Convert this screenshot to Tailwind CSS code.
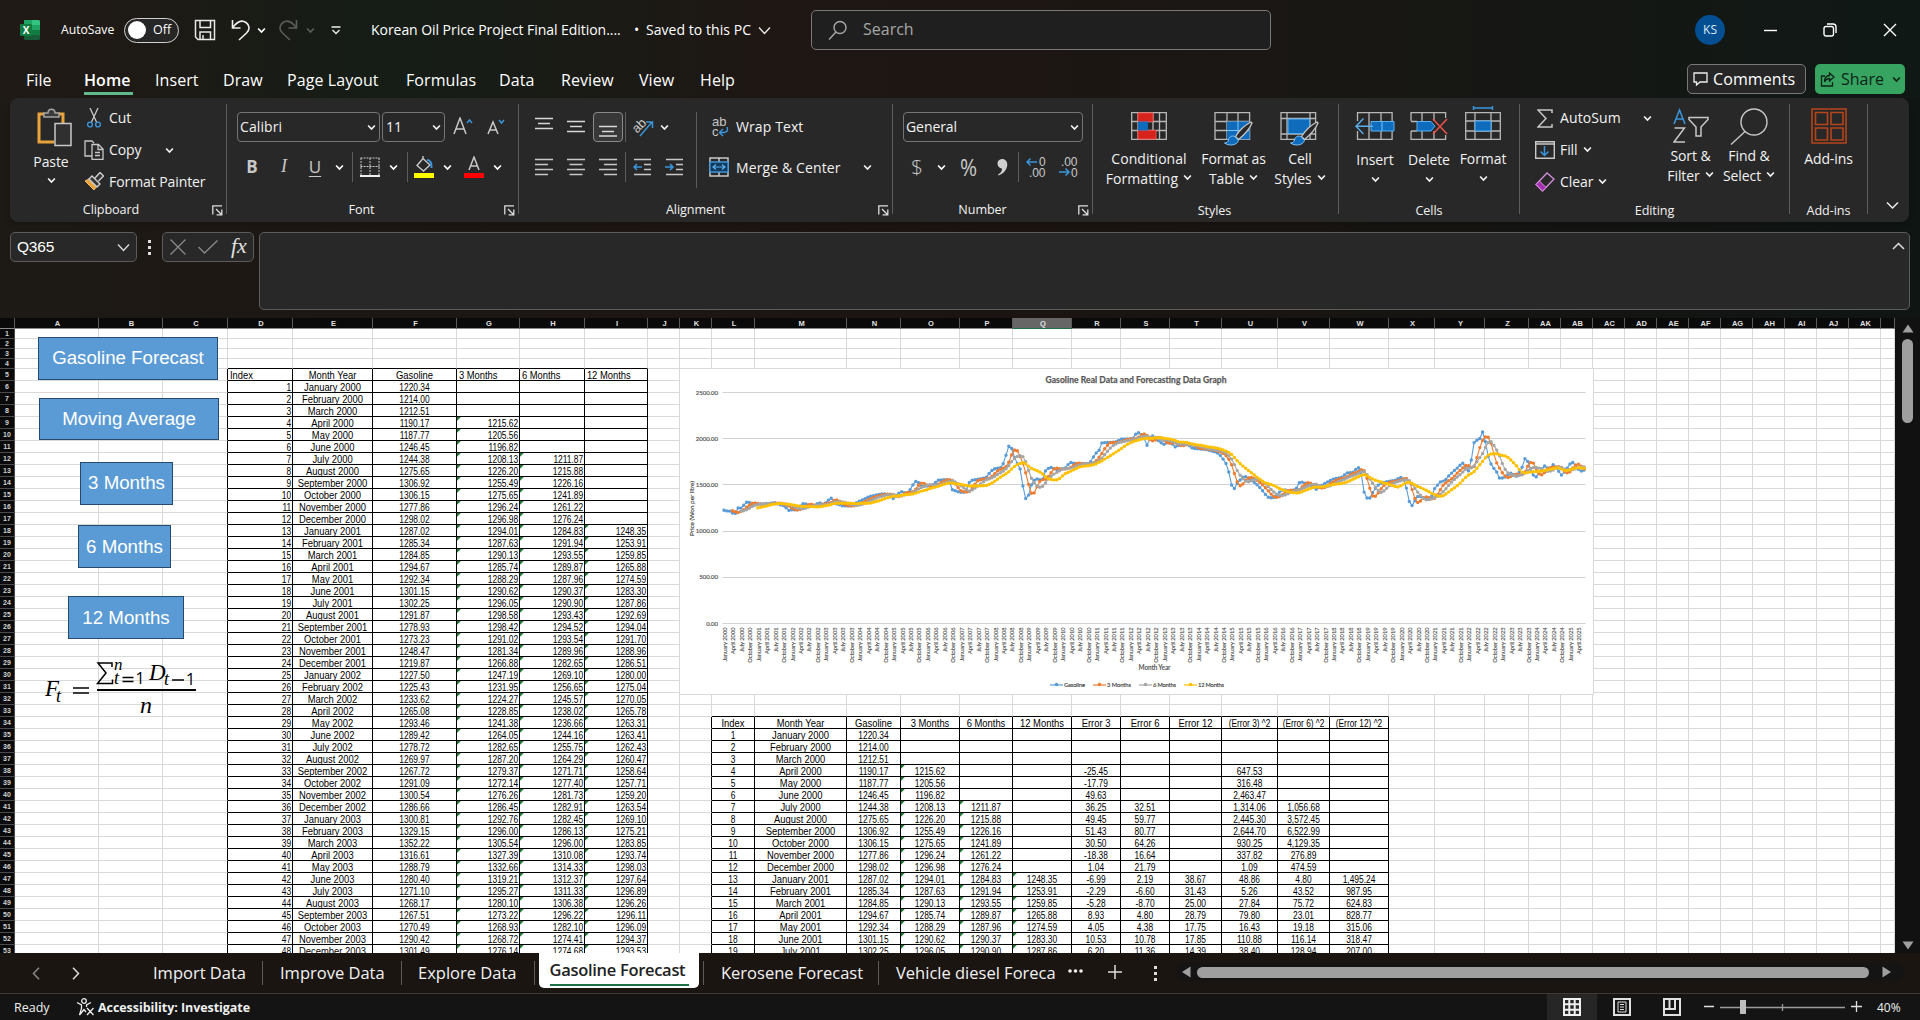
<!DOCTYPE html>
<html lang="en">
<head>
<meta charset="utf-8">
<title>Korean Oil Price Project Final Edition - Excel</title>
<script src="https://cdn.jsdelivr.net/npm/@tailwindcss/browser@4"></script>
</head>
<body class="w-[1920px] h-[1020px] overflow-hidden flex flex-col bg-[#171310] text-white font-['Open_Sans','Noto_Sans',sans-serif] text-sm leading-none whitespace-nowrap">

<!-- shared icon symbols -->
<svg class="hidden">
  <symbol id="chev" viewBox="0 0 8 6"><path d="M1 1.2 4 4.4 7 1.2" fill="none" stroke="currentColor" stroke-width="1.5"/></symbol>
  <symbol id="launch" viewBox="0 0 11 11"><path d="M.8 9.5V.8H10M4 4l5.2 5.2M9.8 4.6v5.2H4.6" fill="none" stroke="#ddd" stroke-width="1.3"/></symbol>
  <symbol id="brush" viewBox="0 0 30 26"><path d="M27 2 C21 5 15 11 11.500 16.500 L14.500 19.500 C20 15 26 8 28 3Z" fill="#292929" stroke="#c8c6c4" stroke-width="1.3"/><path d="M11 16.500c-4-1.500-6 1-6.500 3.500-.5 2-2 3-4 3 4 3 12 3 14-2.500Z" fill="#0f6cbd" stroke="#83c4f5" stroke-width="1"/></symbol>
</svg>

<header class="h-[98px] shrink-0 bg-linear-to-r from-[#1f1a15] via-[#1e1613] to-[#0f1815]">
  <div class="h-[98px] bg-linear-to-r from-transparent from-5% via-[#151d16] via-20% to-transparent to-40%">
  <div class="h-[60px] flex items-center">
    <svg class="w-[20px] h-[20px] ml-[20px]" viewBox="0 0 20 20"><rect x="4" width="16" height="20" rx="1.500" fill="#185c37"/><path d="M4 0h8v5H4z" fill="#21a366"/><path d="M12 0h6.500Q20 0 20 1.500V5h-8z" fill="#33c481"/><path d="M4 5h8v5H4z" fill="#107c41"/><path d="M12 5h8v5h-8z" fill="#21a366"/><path d="M12 10h8v5h-8z" fill="#107c41"/><rect y="4" width="12" height="12" rx="1" fill="#107c41"/><text x="6" y="13.500" text-anchor="middle" font-size="10" font-weight="700" fill="#fff">X</text></svg>
    <span class="ml-[21px] w-[63px] text-[12.2px]">AutoSave</span>
    <div class="w-[55px] h-[25px] rounded-full border border-[#d0d0d0] bg-[#262626] flex items-center pl-[3px]">
      <span class="size-[18px] rounded-full bg-white"></span><span class="ml-[7px] text-[12.5px]">Off</span>
    </div>
    <svg class="size-[22px] ml-[15px]" viewBox="0 0 22 22" fill="none" stroke="#e8e8e8" stroke-width="1.500"><path d="M1.500 1.500h19v19H4l-2.500-2.500zM6 1.500v7h10.500v-7M6 20.500V13h10.500v7.500M9 20v-4"/></svg>
    <svg class="w-[20px] h-[22px] ml-[15px]" viewBox="0 0 20 22" fill="none" stroke="#f0f0f0" stroke-width="1.600"><path d="M1.500 1v8h8M1.500 9C6 2.500 11 .8 15 3.500c4 2.800 4 7 .5 10.500L8 21"/></svg>
    <svg class="w-[9px] h-[7px] ml-[6px]"><use href="#chev"/></svg>
    <svg class="w-[20px] h-[22px] ml-[12px]" viewBox="0 0 20 22" fill="none" stroke="#5c5c5c" stroke-width="1.600"><path d="M18.500 1v8h-8M18.500 9C14 2.500 9 .8 5 3.500c-4 2.800-4 7-.5 10.500L12 21"/></svg>
    <svg class="w-[9px] h-[7px] ml-[8px] text-[#5c5c5c]"><use href="#chev"/></svg>
    <svg class="w-[10px] h-[9px] ml-[16px]" viewBox="0 0 10 9" fill="none" stroke="#eee" stroke-width="1.300"><path d="M.5 1h9M1.500 4 5 7.500 8.500 4"/></svg>
    <span class="ml-[30px] w-[263px] text-[14px] tracking-[-0.05px]">Korean Oil Price Project Final Edition....</span>
    <span class="w-[12px] text-[14px]">•</span>
    <span class="w-[112px] text-[14px] tracking-[0.05px]">Saved to this PC</span>
    <svg class="w-[13px] h-[9px]" viewBox="0 0 13 9" fill="none" stroke="#eee" stroke-width="1.300"><path d="M1 1.500 6.500 7.500 12 1.500"/></svg>
    <div class="ml-[40px] w-[460px] h-[40px] rounded-[5px] border border-[#7a7876] bg-[#1f1f1f] flex items-center">
      <svg class="ml-[16px] size-[20px]" viewBox="0 0 20 20" fill="none" stroke="#a8a8a8" stroke-width="1.400"><circle cx="12" cy="7.500" r="6"/><path d="M8 12 1 19.500"/></svg>
      <span class="ml-[15px] text-[16px] text-[#a6a6a6] -mt-[2px]">Search</span>
    </div>
    <div class="ml-[424px] size-[30px] rounded-full bg-[#034f91] flex items-center justify-center text-[12px] text-[#dbe9f5]">KS</div>
    <svg class="ml-[39px] w-[13px] h-[3px]" viewBox="0 0 13 3"><path d="M0 1.500h13" stroke="#fff" stroke-width="1.400"/></svg>
    <svg class="ml-[46px] size-[14px]" viewBox="0 0 14 14" fill="none" stroke="#fff" stroke-width="1.400"><rect x="1" y="3.500" width="9.500" height="9.500" rx="2"/><path d="M4 1h6q3 0 3 3v6"/></svg>
    <svg class="ml-[46px] size-[14px]" viewBox="0 0 14 14" fill="none" stroke="#fff" stroke-width="1.400"><path d="m1 1 12 12M13 1 1 13"/></svg>
  </div>
  <div class="h-[38px] flex items-start pt-[4px] text-[16px]">
    <nav class="flex h-[34px] items-start pt-[8px] w-[1687px] tracking-[0.08px]">
      <span class="ml-[26px] w-[58px]">File</span>
      <span class="w-[49px] h-[23px] font-semibold border-b-3 border-[#5fb98a]">Home</span>
      <span class="ml-[22px] w-[68px]">Insert</span><span class="w-[64px]">Draw</span><span class="w-[119px]">Page Layout</span><span class="w-[93px]">Formulas</span><span class="w-[62px]">Data</span><span class="w-[78px]">Review</span><span class="w-[61px]">View</span><span>Help</span>
    </nav>
    <div class="w-[119px] h-[30px] rounded-[5px] border border-[#7a7876] bg-[#262626] flex items-center pl-[5px]">
      <svg class="w-[15px] h-[14px]" viewBox="0 0 15 14" fill="none" stroke="#eee" stroke-width="1.300"><path d="M1 1h13v9H7l-3.500 3V10H1z"/></svg>
      <span class="ml-[5px] tracking-[0.1px]">Comments</span>
    </div>
    <div class="ml-[9px] w-[90px] h-[30px] rounded-[5px] bg-[#37a461] text-[#0c2416] flex items-center pl-[5px]">
      <svg class="w-[15px] h-[15px]" viewBox="0 0 15 15" fill="none" stroke="#0c2416" stroke-width="1.300"><path d="M5 4H1.500v10h11v-4M9.500 1 14 5 9.500 9V6.500C7 6.500 5.500 8 4.500 10 4.500 6 6.500 3.700 9.500 3.500z"/></svg>
      <span class="ml-[6px]">Share</span>
      <svg class="w-[9px] h-[7px] ml-[8px]"><use href="#chev"/></svg>
    </div>
  </div>
  </div>
</header>

<!-- ribbon and formula bar -->
<div class="shrink-0 h-[220px] bg-linear-to-r from-[#1d1914] via-[#1c1411] to-[#0f1513]">
<section class="ml-[10px] w-[1899px] h-[124px] rounded-[8px] bg-[#282828] flex text-[#f2f2f2] text-[14px] tracking-[-0.08px] shadow-md">

  <!-- Clipboard -->
  <div class="w-[216px] flex flex-col pt-[4px]">
    <div class="flex h-[98px]">
      <div class="w-[74px] flex flex-col items-center pt-[6px] pl-[8px]">
        <svg class="w-[36px] h-[39px] ml-[7px]" viewBox="0 0 36 39" fill="none"><path d="M8 6H2v28h15M20 6h6v9" stroke="#e8a33d" stroke-width="3"/><path d="M7 9V5h4c0-5 7-5 7 0h4v4z" fill="#3a3a3a" stroke="#a5a5a5" stroke-width="1.500"/><rect x="18" y="15.500" width="16" height="22" fill="#303030" stroke="#c8c8c8" stroke-width="1.500"/></svg>
        <span class="mt-[8px]">Paste</span>
        <svg class="w-[9px] h-[7px] mt-[8px]"><use href="#chev"/></svg>
      </div>
      <div class="flex flex-col">
        <div class="h-[32px] flex items-center"><svg class="ml-[3px] w-[14px] h-[20px]" viewBox="0 0 14 20" fill="none"><path d="M3 0 9.500 14M11 0 4.500 14" stroke="#c8c8c8" stroke-width="1.300"/><circle cx="3" cy="16.500" r="2.400" stroke="#3a96dd" stroke-width="1.400"/><circle cx="11" cy="16.500" r="2.400" stroke="#3a96dd" stroke-width="1.400"/></svg><span class="ml-[8px]">Cut</span></div>
        <div class="h-[32px] flex items-center"><svg class="w-[20px] h-[20px]" viewBox="0 0 20 20" fill="none" stroke="#c8c8c8" stroke-width="1.300"><path d="M8 16H1V1h7l2 2M8 19.300V4.500h6.500l4.500 4.500v10.300zM14 4.500V9.500h5M11 12.500h5M11 15.500h5"/></svg><span class="ml-[5px] w-[56px]">Copy</span><svg class="w-[9px] h-[7px]"><use href="#chev"/></svg></div>
        <div class="h-[32px] flex items-center"><svg class="w-[20px] h-[20px]" viewBox="0 0 20 20" fill="none"><path d="m1 9 9 9 3-4-8-7z" fill="#e8a33d" stroke="#f0c070"/><path d="m5 7 3-3 8 8-3 3zM11 6l5-5.500 3.500 3.500L14.500 9" fill="#333" stroke="#d0d0d0" stroke-width="1.400"/></svg><span class="ml-[5px]">Format Painter</span></div>
      </div>
    </div>
    <div class="h-[20px] flex items-center text-[12.600px]"><span class="w-[202px] text-center">Clipboard</span><svg class="size-[11px]"><use href="#launch"/></svg></div>
  </div>
  <i class="w-px h-[110px] mt-[6px] bg-[#5c5c5c]"></i>

  <!-- Font -->
  <div class="w-[291px] flex flex-col pt-[14px]">
    <div class="flex h-[30px] items-center">
      <div class="ml-[10px] w-[143px] h-[30px] rounded-[4px] border border-[#757575] flex items-center justify-between pl-[2px] pr-[3px]"><span class="tracking-[0.1px]">Calibri</span><svg class="w-[9px] h-[7px]"><use href="#chev"/></svg></div>
      <div class="ml-[2px] w-[63px] h-[30px] rounded-[4px] border border-[#757575] flex items-center justify-between pl-[3px] pr-[3px]"><span>11</span><svg class="w-[9px] h-[7px]"><use href="#chev"/></svg></div>
      <svg class="ml-[8px] w-[20px] h-[20px]" viewBox="0 0 20 20" fill="none" stroke="#c8c8c8" stroke-width="1.500"><path d="M1 17 7 1l6 16M3 12h8"/><path d="m14 6 2.500-3L19 6" stroke="#3a96dd"/></svg>
      <svg class="ml-[14px] w-[20px] h-[20px]" viewBox="0 0 20 20" fill="none" stroke="#c8c8c8" stroke-width="1.500"><path d="M1 17 6 5l5 12M3 13h6"/><path d="m12 3 2.500 3L17 3" stroke="#3a96dd"/></svg>
    </div>
    <div class="mt-[10px] flex h-[30px] items-center text-[#c8c8c8]">
      <span class="ml-[15px] w-[20px] text-center text-[17px] font-bold -mt-[2px]">B</span>
      <span class="ml-[12px] w-[20px] text-center text-[18px] italic font-['Liberation_Serif',serif] -mt-[2px]">I</span>
      <span class="ml-[11px] w-[20px] text-center text-[17px] underline underline-offset-3 -mt-[2px]">U</span>
      <svg class="ml-[10px] w-[9px] h-[7px] text-white"><use href="#chev"/></svg>
      <i class="ml-[8px] w-px h-[30px] bg-[#5c5c5c]"></i>
      <svg class="ml-[7px] size-[20px]" viewBox="0 0 20 20" fill="none" stroke="#c8c8c8"><path d="M.5 1h19M.5 9.500h19M1 1v17M10 1v17M19 1v17" stroke-dasharray="2 1"/><path d="M0 19h20" stroke-width="2" stroke="#eee"/></svg>
      <svg class="ml-[9px] w-[9px] h-[7px] text-white"><use href="#chev"/></svg>
      <i class="ml-[9px] w-px h-[30px] bg-[#5c5c5c]"></i>
      <svg class="ml-[6px] w-[20px] h-[22px]" viewBox="0 0 20 22" fill="none"><path d="m3 9.500 6-7 7 6.500-6.500 6zM9 2.500V0" stroke="#c8c8c8" stroke-width="1.400"/><path d="M13 4q5 0 4.500 8" stroke="#3a96dd" stroke-width="2"/><path d="M0 17h20v5H0z" fill="#ff0"/></svg>
      <svg class="ml-[9px] w-[9px] h-[7px] text-white"><use href="#chev"/></svg>
      <svg class="ml-[12px] w-[20px] h-[22px]" viewBox="0 0 20 22" fill="none"><path d="m5 14 5-13 5 13M7 10h6" stroke="#c8c8c8" stroke-width="1.500"/><path d="M0 17h20v5H0z" fill="#f00"/></svg>
      <svg class="ml-[9px] w-[9px] h-[7px] text-white"><use href="#chev"/></svg>
    </div>
    <div class="mt-[18px] h-[20px] flex items-center text-[12.600px]"><span class="w-[277px] text-center pr-[8px]">Font</span><svg class="size-[11px]"><use href="#launch"/></svg></div>
  </div>
  <i class="w-px h-[110px] mt-[6px] bg-[#5c5c5c]"></i>

  <!-- Alignment -->
  <div class="w-[373px] flex flex-col pt-[14px]">
    <div class="flex">
      <div class="w-[177px] flex flex-col gap-[10px]">
        <div class="flex h-[30px] items-center">
          <svg class="ml-[16px] w-[18px] h-[20px]" viewBox="0 0 18 20" stroke="#d8d8d8" stroke-width="1.500"><path d="M0 1.500h18M3 6.500h12M0 11.500h18"/></svg>
          <svg class="ml-[14px] w-[18px] h-[20px]" viewBox="0 0 18 20" stroke="#d8d8d8" stroke-width="1.500"><path d="M0 4.500h18M3 9.500h12M0 14.500h18"/></svg>
          <div class="ml-[8px] w-[30px] h-[30px] rounded-[4px] border border-[#8a8a8a] bg-[#383838] flex items-center justify-center"><svg class="w-[18px] h-[20px]" viewBox="0 0 18 20" stroke="#d8d8d8" stroke-width="1.500"><path d="M0 9.500h18M3 14.500h12M0 19h18"/></svg></div>
          <i class="ml-[2px] w-px h-[30px] bg-[#5c5c5c]"></i>
          <svg class="ml-[6px] size-[22px]" viewBox="0 0 22 22" fill="none"><text x="0" y="14" font-size="13" fill="#c8c8c8" transform="rotate(-45 7 10)" font-family="Liberation Sans">ab</text><path d="M8 20 20 6M14 6h6.500v6" stroke="#3a96dd" stroke-width="1.500"/></svg>
          <svg class="ml-[6px] w-[9px] h-[7px]"><use href="#chev"/></svg>
        </div>
        <div class="flex h-[30px] items-center">
          <svg class="ml-[16px] w-[18px] h-[18px]" viewBox="0 0 18 18" stroke="#c8c8c8" stroke-width="1.500"><path d="M0 1.500h18M0 6.500h13M0 11.500h18M0 16.500h13"/></svg>
          <svg class="ml-[14px] w-[18px] h-[18px]" viewBox="0 0 18 18" stroke="#c8c8c8" stroke-width="1.500"><path d="M0 1.500h18M2.500 6.500h13M0 11.500h18M2.500 16.500h13"/></svg>
          <svg class="ml-[14px] w-[18px] h-[18px]" viewBox="0 0 18 18" stroke="#c8c8c8" stroke-width="1.500"><path d="M0 1.500h18M5 6.500h13M0 11.500h18M5 16.500h13"/></svg>
          <i class="ml-[8px] w-px h-[30px] bg-[#5c5c5c]"></i>
          <svg class="ml-[7px] w-[19px] h-[18px]" viewBox="0 0 19 18" fill="none" stroke="#c8c8c8" stroke-width="1.500"><path d="M1 1.500h17M11 6.500h7M11 11.500h7M1 16.500h17"/><path d="M9 9H1M4 6 1 9l3 3" stroke="#3a96dd"/></svg>
          <svg class="ml-[13px] w-[19px] h-[18px]" viewBox="0 0 19 18" fill="none" stroke="#c8c8c8" stroke-width="1.500"><path d="M1 1.500h17M11 6.500h7M11 11.500h7M1 16.500h17"/><path d="M0 9h8M5 6l3 3-3 3" stroke="#3a96dd"/></svg>
        </div>
      </div>
      <i class="w-px h-[76px] bg-[#5c5c5c]"></i>
      <div class="flex flex-col gap-[10px]">
        <div class="h-[30px] flex items-center"><svg class="ml-[14px] w-[20px] h-[20px]" viewBox="0 0 20 20" fill="none"><text x="1" y="9" font-size="13" fill="#c8c8c8" font-family="Liberation Sans">ab</text><text x="1" y="19" font-size="13" fill="#c8c8c8" font-family="Liberation Sans">c</text><path d="M16 10q2 5-3 5.500H9M12 12l-3.500 3.500L12 19" stroke="#3a96dd" stroke-width="1.500"/></svg><span class="ml-[5px] tracking-[0.1px]">Wrap Text</span></div>
        <div class="h-[30px] flex items-center"><svg class="ml-[12px] size-[20px]" viewBox="0 0 20 20" fill="none"><path d="M1 1h18v18H1zM10 1v4M10 15v4" stroke="#c8c8c8" stroke-width="1.500"/><path d="M1 5h18v10H1z" fill="#14395a" stroke="#3a96dd" stroke-width="1.300"/><path d="M4 10h12M7 7.500 4 10l3 2.500M13 7.500l3 2.500-3 2.500" stroke="#5ab0ee" stroke-width="1.200"/></svg><span class="ml-[7px] w-[127px] tracking-[0.12px] pt-px">Merge &amp; Center</span><svg class="w-[9px] h-[7px]"><use href="#chev"/></svg></div>
      </div>
    </div>
    <div class="mt-[12px] h-[20px] flex items-center text-[12.600px]"><span class="w-[359px] text-center pr-[6px]">Alignment</span><svg class="size-[11px]"><use href="#launch"/></svg></div>
  </div>
  <i class="w-px h-[110px] mt-[6px] bg-[#5c5c5c]"></i>

  <!-- Number -->
  <div class="w-[199px] flex flex-col pt-[14px]">
    <div class="ml-[10px] w-[180px] h-[30px] rounded-[4px] border border-[#757575] flex items-center justify-between pl-[2px] pr-[3px]"><span>General</span><svg class="w-[9px] h-[7px]"><use href="#chev"/></svg></div>
    <div class="mt-[10px] flex h-[30px] items-center text-[#c8c8c8]">
      <span class="ml-[14px] w-[20px] text-center text-[21px] font-light">$</span>
      <svg class="ml-[10px] w-[9px] h-[7px] text-white"><use href="#chev"/></svg>
      <span class="ml-[13px] w-[20px] text-center text-[23px] tracking-normal"><span class="inline-block -ml-[1px] scale-x-90">%</span></span>
      <svg class="ml-[18px] w-[11px] h-[17px]" viewBox="0 0 11 17"><path d="M5 0c8 0 7 13-3.500 16.500L1 15.500C4 14 5 12 5 9.500 -1 9 -1 0 5 0Z" fill="#d0d0d0"/></svg>
      <i class="ml-[10px] w-px h-[30px] bg-[#5c5c5c]"></i>
      <svg class="ml-[7px] w-[21px] h-[20px] font-['Liberation_Sans',sans-serif]" viewBox="0 0 21 20" fill="none"><text x="13" y="9" font-size="12" fill="#c8c8c8">0</text><text x="3" y="19.500" font-size="12" fill="#c8c8c8">.00</text><path d="M11 5H1M4.500 1.500 1 5l3.500 3.500" stroke="#3a96dd" stroke-width="1.500"/></svg>
      <svg class="ml-[11px] w-[21px] h-[20px] font-['Liberation_Sans',sans-serif]" viewBox="0 0 21 20" fill="none"><text x="3" y="9" font-size="12" fill="#c8c8c8">.00</text><text x="13" y="19.500" font-size="12" fill="#c8c8c8">0</text><path d="M1 15h10M7.500 11.500 11 15l-3.500 3.500" stroke="#3a96dd" stroke-width="1.500"/></svg>
    </div>
    <div class="mt-[18px] h-[20px] flex items-center text-[12.600px]"><span class="w-[185px] text-center pr-[6px]">Number</span><svg class="size-[11px]"><use href="#launch"/></svg></div>
  </div>
  <i class="w-px h-[110px] mt-[6px] bg-[#5c5c5c]"></i>

  <!-- Styles -->
  <div class="w-[245px] flex flex-col pt-[14px]">
    <div class="flex h-[89px] text-center leading-[20px]">
      <div class="ml-[10px] w-[92px] flex flex-col items-center"><svg class="w-[36px] h-[28px]" viewBox="0 0 36 28" fill="none"><path d="M.7.7h34.600v26.600H.7zM.7 9.500h34.600M.7 18.500h34.600M7 .7v26.600M22 .7v26.600M28.500 .7v26.600" stroke="#b8b8b8" stroke-width="1.300"/><path d="M7 1h15v8.500H7zM7 18.500h18V27H7z" fill="#d6231c" stroke="#ee4a44"/><path d="M7 9.500h10v9H7z" fill="#0f6cbd"/></svg>
        <span class="mt-[9px] tracking-[0.05px]">Conditional</span><span class="flex items-center tracking-[0.05px]">Formatting<svg class="w-[9px] h-[7px] ml-[5px] -mt-[3px]"><use href="#chev"/></svg></span></div>
      <div class="w-[77px] flex flex-col items-center"><div class="h-[28px] overflow-visible"><svg class="w-[40px] h-[34px]" viewBox="0 0 40 34" fill="none"><path d="M1 .7h34.600v26.600H1zM1 9.500h34.600M1 18.500h34.600M13 .7v26.600M24 .7v26.600" stroke="#b8b8b8" stroke-width="1.300"/><path d="M13 9.500h22.600v17.800H13z" fill="#0f6cbd"/><path d="M24 9.500v18M13 18.500h22" stroke="#83c4f5"/><use href="#brush" x="10" y="8" width="30" height="26"/></svg></div>
        <span class="mt-[9px]">Format as</span><span class="flex items-center">Table<svg class="w-[9px] h-[7px] ml-[5px] -mt-[3px]"><use href="#chev"/></svg></span></div>
      <div class="w-[56px] flex flex-col items-center"><div class="h-[28px] overflow-visible"><svg class="w-[40px] h-[34px]" viewBox="0 0 40 34" fill="none"><path d="M1 .7h34.600v26.600H1zM1 6.500h34.600M1 22h34.600M7 .7v26.600M30 .7v26.600" stroke="#b8b8b8" stroke-width="1.300"/><path d="M8 7h21.500v14.500H8z" fill="#0f6cbd" stroke="#5ab0ee"/><use href="#brush" x="10" y="8" width="30" height="26"/></svg></div>
        <span class="mt-[9px]">Cell</span><span class="flex items-center">Styles<svg class="w-[9px] h-[7px] ml-[5px] -mt-[3px]"><use href="#chev"/></svg></span></div>
    </div>
    <div class="h-[20px] flex items-center justify-center text-[12.600px] pr-[2px]">Styles</div>
  </div>
  <i class="w-px h-[110px] mt-[6px] bg-[#5c5c5c]"></i>

  <!-- Cells -->
  <div class="w-[180px] flex flex-col pt-[8px]">
    <div class="flex h-[95px] text-center">
      <div class="ml-[9px] w-[54px] flex flex-col items-center pt-[6px]"><svg class="w-[40px] h-[28px]" viewBox="0 0 40 28" fill="none"><path d="M2.500 9V.7h34.600V9M2.500 19v8.300h34.600V19M14 .7v26.600M26 .7v26.600" stroke="#b8b8b8" stroke-width="1.300"/><path d="M16 9.500h23V19H16z" fill="#0f6cbd" stroke="#5ab0ee"/><path d="M27 9.500V19M18 14.200H1M8.500 6.500 1 14.200 8.500 22" stroke="#5ab0ee" stroke-width="1.400"/></svg><span class="mt-[13px]">Insert</span><svg class="w-[9px] h-[7px] mt-[9px]"><use href="#chev"/></svg></div>
      <div class="w-[54px] flex flex-col items-center pt-[6px]"><svg class="w-[38px] h-[28px]" viewBox="0 0 38 28" fill="none"><path d="M1 9V.7h34.600V6M1 19v8.300h34.600V23M12 .7V9M24 .7V9M12 19v8M24 19v8M1 9.500h6M1 19h6" stroke="#b8b8b8" stroke-width="1.300"/><path d="M7 9.500h14l4 4.700-4 4.800H7z" fill="#0f6cbd" stroke="#5ab0ee"/><path d="m23 7 14 15M37 7 23 22" stroke="#e8504a" stroke-width="1.600"/></svg><span class="mt-[13px]">Delete</span><svg class="w-[9px] h-[7px] mt-[9px]"><use href="#chev"/></svg></div>
      <div class="w-[54px] flex flex-col items-center"><svg class="w-[36px] h-[34px]" viewBox="0 0 36 34" fill="none"><path d="M8.500 0v4M27.500 0v4M8.500 2h19" stroke="#3a96dd" stroke-width="1.400"/><path d="M.7 6.700h34.600v26.600H.7zM.7 15h34.600M.7 25h34.600M10 6.700v26.600M26 6.700v26.600" stroke="#b8b8b8" stroke-width="1.300"/><path d="M10 15h16v10H10z" fill="#0f6cbd" stroke="#5ab0ee"/></svg><span class="mt-[12px]">Format</span><svg class="w-[9px] h-[7px] mt-[9px]"><use href="#chev"/></svg></div>
    </div>
    <div class="h-[20px] flex items-center justify-center text-[12.600px]">Cells</div>
  </div>
  <i class="w-px h-[110px] mt-[6px] bg-[#5c5c5c]"></i>

  <!-- Editing -->
  <div class="w-[269px] flex flex-col pt-[4px]">
    <div class="flex h-[99px]">
      <div class="ml-[15px] w-[125px] flex flex-col">
        <div class="h-[32px] flex items-center"><svg class="ml-[2px] w-[16px] h-[19px]" viewBox="0 0 16 19" fill="none" stroke="#c8c8c8" stroke-width="1.500"><path d="M15 4V1H1l8 8.500L1 18h14v-3"/></svg><span class="ml-[7px] w-[83px] tracking-[0.1px]">AutoSum</span><svg class="w-[9px] h-[7px]"><use href="#chev"/></svg></div>
        <div class="h-[32px] flex items-center"><svg class="w-[20px] h-[18px]" viewBox="0 0 20 18" fill="none"><path d="M.7.7h18.600v16.600H.7zM.7 3h18.600" stroke="#c8c8c8" stroke-width="1.400"/><path d="M9.500 5v9.500M5.500 10.500l4 4 4-4" stroke="#3a96dd" stroke-width="1.500"/></svg><span class="ml-[5px]">Fill</span><svg class="w-[9px] h-[7px] ml-[5px] -mt-[2px]"><use href="#chev"/></svg></div>
        <div class="h-[32px] flex items-center"><svg class="w-[20px] h-[20px]" viewBox="0 0 20 20" fill="none"><path d="M1 12.500 12 1l7 6L7.500 19z" stroke="#d590dd" stroke-width="1.300"/><path d="M1 12.500 4.500 9l6.500 6.500L7.500 19z" fill="#a32eb0" stroke="#d590dd"/></svg><span class="ml-[5px]">Clear</span><svg class="w-[9px] h-[7px] ml-[5px] -mt-[2px]"><use href="#chev"/></svg></div>
      </div>
      <div class="w-[61px] flex flex-col items-center text-center leading-[20px] pt-[6px]"><svg class="w-[36px] h-[36px]" viewBox="0 0 36 36" fill="none"><path d="m1 16 5.500-14L12 16M3 11h7" stroke="#3a96dd" stroke-width="1.500"/><path d="M1.500 20h10L1 34h11M16 9.500h19v2l-7 7.500v9h-5v-9l-7-7.500z" stroke="#c8c8c8" stroke-width="1.500"/></svg><span class="pt-[2px]">Sort &amp;</span><span class="flex items-center">Filter<svg class="w-[9px] h-[7px] ml-[5px] -mt-[3px]"><use href="#chev"/></svg></span></div>
      <div class="w-[56px] flex flex-col items-center text-center leading-[20px] pt-[6px]"><svg class="w-[38px] h-[37px]" viewBox="0 0 38 37" fill="none" stroke="#c8c8c8" stroke-width="1.400"><circle cx="24" cy="14" r="13"/><path d="M15 23.500 1 36.500"/></svg><span class="pt-[1px]">Find &amp;</span><span class="flex items-center">Select<svg class="w-[9px] h-[7px] ml-[5px] -mt-[3px]"><use href="#chev"/></svg></span></div>
    </div>
    <div class="h-[20px] flex items-center justify-center text-[12.600px]">Editing</div>
  </div>
  <i class="w-px h-[110px] mt-[6px] bg-[#5c5c5c]"></i>

  <div class="w-[77px] flex flex-col items-center pt-[10px]">
    <svg class="size-[36px]" viewBox="0 0 36 36" fill="none" stroke="#b5451b" stroke-width="1.600"><path d="M1 1h34v34H1zM4.500 4.500h12v12h-12zM20 4.500h12v12H20zM4.500 20h12v12h-12zM20 20h12v12H20z"/></svg>
    <span class="mt-[8px] h-[53px]">Add-ins</span>
    <span class="text-[12.600px]">Add-ins</span>
  </div>
  <i class="w-px h-[110px] mt-[6px] bg-[#5c5c5c]"></i>
  <svg class="ml-[18px] mt-[103px] w-[13px] h-[9px]" viewBox="0 0 13 9" fill="none" stroke="#eee" stroke-width="1.500"><path d="M1 1.500 6.500 7 12 1.500"/></svg>
</section>

<section class="flex pt-[10px] pl-[10px]">
  <div class="w-[127px] h-[30px] rounded-[5px] border border-[#5c5c5c] bg-[#282828] flex items-center justify-between pl-[6px] pr-[6px]"><span class="text-[15.500px] tracking-[-0.2px] font-['Liberation_Sans',sans-serif]">Q365</span><svg class="w-[13px] h-[9px]" viewBox="0 0 13 9" fill="none" stroke="#ddd" stroke-width="1.300"><path d="M1 1.500 6.500 7.500 12 1.500"/></svg></div>
  <svg class="ml-[11px] mt-[8px] w-[3px] h-[15px]" viewBox="0 0 3 15" fill="#ddd"><path d="M0 0h3v3H0zM0 6h3v3H0zM0 12h3v3H0z"/></svg>
  <div class="ml-[11px] w-[92px] h-[30px] rounded-[5px] border border-[#5c5c5c] bg-[#282828] flex items-center">
    <svg class="ml-[7px] size-[16px]" viewBox="0 0 16 16" stroke="#8a8a8a" stroke-width="1.300"><path d="m.5 .5 15 15M15.500 .5l-15 15"/></svg>
    <svg class="ml-[12px] w-[20px] h-[14px]" viewBox="0 0 20 14" fill="none" stroke="#8a8a8a" stroke-width="1.300"><path d="m.5 7 6 6L19.500 .5"/></svg>
    <span class="ml-[13px] -mt-[3px] text-[22px] italic text-[#e0e0e0] font-['Liberation_Serif',serif]">fx</span>
  </div>
  <div class="ml-[5px] w-[1651px] h-[78px] rounded-[5px] border border-[#5c5c5c] bg-[#282828] flex justify-end pt-[9px] pr-[4px]"><svg class="w-[13px] h-[8px]" viewBox="0 0 13 8" fill="none" stroke="#ddd" stroke-width="1.500"><path d="M1 7 6.500 1.500 12 7"/></svg></div>
</section>
</div>

<!-- worksheet -->
<main class="h-[635px] shrink-0 flex bg-[#111] overflow-hidden">
  <div class="relative w-[1895px] h-[635px] overflow-hidden bg-white text-black">
    <table id="sheet" class="table-fixed border-separate border-spacing-0 w-[1895px] font-['Liberation_Sans',sans-serif]"></table>

    <a class="absolute left-[38px] top-[19px] w-[180px] h-[43px] bg-[#5b9bd5] border border-[#274b6d] text-white text-[18.700px] flex items-center justify-center font-['Liberation_Sans',sans-serif]">Gasoline Forecast</a>
    <a class="absolute left-[39px] top-[80px] w-[180px] h-[42px] bg-[#5b9bd5] border border-[#274b6d] text-white text-[18.700px] flex items-center justify-center pt-px font-['Liberation_Sans',sans-serif]">Moving Average</a>
    <a class="absolute left-[80px] top-[144px] w-[93px] h-[43px] bg-[#5b9bd5] border border-[#274b6d] text-white text-[18.700px] flex items-center justify-center font-['Liberation_Sans',sans-serif]">3 Months</a>
    <a class="absolute left-[78px] top-[207px] w-[93px] h-[43px] bg-[#5b9bd5] border border-[#274b6d] text-white text-[18.700px] flex items-center justify-center pt-px font-['Liberation_Sans',sans-serif]">6 Months</a>
    <a class="absolute left-[68px] top-[278px] w-[116px] h-[43px] bg-[#5b9bd5] border border-[#274b6d] text-white text-[18.700px] flex items-center justify-center pt-px font-['Liberation_Sans',sans-serif]">12 Months</a>

    <!-- moving average formula -->
    <svg class="absolute left-[40px] top-[337px] w-[162px] h-[64px] font-['Liberation_Serif',serif]" viewBox="40 655 162 64">
      <g font-style="italic" font-size="23">
        <text x="45" y="696">F</text><text x="56" y="702" font-size="18">t</text>
        <text x="114" y="670" font-size="17">n</text><text x="114" y="684" font-size="18">t</text>
        <text x="149" y="680">D</text><text x="164" y="685" font-size="18">t</text>
        <text x="140" y="713" font-size="24">n</text>
      </g>
      <g font-size="16" font-family="Open Sans"><text x="135.500" y="684">1</text><text x="186" y="685">1</text></g>
      <path d="M73 688h16M73 693h16M122.500 677.500h11M122.500 681.500h11M172 680h12" stroke="#000" stroke-width="1.300"/>
      <path d="M112 667v-4H98l8 10-8.500 10.500H112.500v-4" fill="none" stroke="#000" stroke-width="1.500"/>
      <path d="M97 690h99" stroke="#000" stroke-width="1.800"/>
    </svg>

    <svg id="chart" class="absolute left-[679px] top-[50px] w-[915px] h-[327px] font-['Lato',sans-serif]" viewBox="679 368 915 327"></svg>
  </div>
  <div class="w-[25px] flex flex-col items-center pt-[6px] pb-[3px]">
    <svg class="w-[12px] h-[9px]" viewBox="0 0 12 9"><path d="M6 .5 11.500 8.500H.5z" fill="#9f9f9f"/></svg>
    <span class="mt-[6px] w-[11px] h-[84px] rounded-full bg-[#9f9f9f]"></span>
    <svg class="mt-auto w-[12px] h-[9px]" viewBox="0 0 12 9"><path d="M6 8.500 11.500 .5H.5z" fill="#9f9f9f"/></svg>
  </div>
</main>

<!-- sheet tabs -->
<section class="h-[41px] shrink-0 flex items-center bg-[#1b1512] border-b border-[#3c3a38] text-[16.500px] text-[#f2f2f2]">
  <svg class="ml-[32px] w-[8px] h-[13px]" viewBox="0 0 8 13" fill="none" stroke="#8a8a8a" stroke-width="1.500"><path d="M7 .8 1.500 6.500 7 12.200"/></svg>
  <svg class="ml-[32px] w-[8px] h-[13px]" viewBox="0 0 8 13" fill="none" stroke="#ddd" stroke-width="1.500"><path d="M1 .8 6.500 6.500 1 12.200"/></svg>
  <span class="ml-[73px] w-[109px] pt-px">Import Data</span><i class="w-px h-[24px] bg-[#5c5c5c]"></i>
  <span class="ml-[17px] w-[121px] pt-px">Improve Data</span><i class="w-px h-[24px] bg-[#5c5c5c]"></i>
  <span class="ml-[16px] w-[116px] pt-px">Explore Data</span><i class="w-px h-[24px] bg-[#5c5c5c]"></i>
  <div class="ml-[4px] w-[160px] h-[35px] self-start rounded-b-[5px] bg-white text-[#222] flex flex-col items-center pt-[9px]"><span class="h-[24px] w-[139px] border-b-2 border-[#1e7145] font-semibold tracking-[-0.3px]">Gasoline Forecast</span></div>
  <i class="ml-[4px] w-px h-[24px] bg-[#5c5c5c]"></i>
  <span class="ml-[17px] w-[157px] pt-px">Kerosene Forecast</span><i class="w-px h-[24px] bg-[#5c5c5c]"></i>
  <span class="ml-[17px] w-[172px] pt-px">Vehicle diesel Foreca</span>
  <svg class="-mt-[4px] w-[15px] h-[4px]" viewBox="0 0 15 4" fill="#eee"><circle cx="2" cy="2" r="1.800"/><circle cx="7.500" cy="2" r="1.800"/><circle cx="13" cy="2" r="1.800"/></svg>
  <svg class="ml-[24px] -mt-[3px] w-[16px] h-[16px]" viewBox="0 0 16 16" stroke="#ddd" stroke-width="1.500"><path d="M8 1v14M1 8h14"/></svg>
  <svg class="ml-[31px] w-[3px] h-[15px]" viewBox="0 0 3 15" fill="#ddd"><path d="M0 0h3v3H0zM0 6h3v3H0zM0 12h3v3H0z"/></svg>
  <div class="ml-[20px] -mt-[2px] w-[727px] h-[18px] rounded-full bg-[#141414] flex items-center">
    <svg class="ml-[5px] w-[9px] h-[12px]" viewBox="0 0 9 12"><path d="M0 6 8.500 .5v11z" fill="#9f9f9f"/></svg>
    <span class="ml-[6px] w-[672px] h-[11px] rounded-full bg-[#9f9f9f]"></span>
    <svg class="ml-[13px] w-[9px] h-[12px]" viewBox="0 0 9 12"><path d="M9 6 .5 .5v11z" fill="#9f9f9f"/></svg>
  </div>
</section>

<footer class="h-[26px] shrink-0 flex items-center bg-[#141414] text-[12.500px] text-[#f0f0f0]">
  <span class="ml-[14px] w-[62px] pt-[2px]">Ready</span>
  <svg class="w-[19px] h-[18px]" viewBox="0 0 19 18" fill="none" stroke="#eee" stroke-width="1.300"><circle cx="8" cy="3" r="2.300"/><path d="M1 4.500 5.500 7v3.500L3.500 17 8 11.500l2 2.500M15 4.500 10.500 7v2M11 10l6.500 7M17.500 10 11 17"/></svg>
  <span class="ml-[3px] w-[1449px] font-bold tracking-[-0.06px] pt-[2px]">Accessibility: Investigate</span>
  <div class="w-[50px] h-[26px] bg-[#262626] flex items-center justify-center"><svg class="size-[18px]" viewBox="0 0 18 18" fill="none" stroke="#f0f0f0" stroke-width="2"><path d="M1 1h16v16H1zM1 6.300h16M1 11.700h16M6.300 1v16M11.700 1v16"/></svg></div>
  <svg class="ml-[16px] size-[18px]" viewBox="0 0 18 18" fill="none" stroke="#e0e0e0"><path d="M1 1h16v16H1z" stroke-width="2"/><path d="M5 4h8v10H5zM7 6.500h4M7 9h4M7 11.500h4"/></svg>
  <svg class="ml-[32px] size-[18px]" viewBox="0 0 18 18" fill="none" stroke="#e0e0e0" stroke-width="2"><path d="M1 1h16v16H1zM1 11h11V1M6.500 1v10"/></svg>
  <svg class="ml-[23px] w-[158px] h-[16px]" viewBox="0 0 158 16" stroke="#e0e0e0" stroke-width="1.300"><path d="M0 7.500h10M147 7.500h11M152.500 2v11"/><path d="M16 8.500h125M78.500 5v7" stroke="#9a9a9a"/><path d="M36 1h6v14h-6z" fill="#bdbdbd" stroke="none"/></svg>
  <span class="ml-[15px] pt-[2px] text-[12px]">40%</span>
</footer>

<script>
// exclusive right edge of every column, starting with the row header
const edges = [15,99,163,228,293,373,457,520,585,648,680,712,755,847,901,960,1013,1072,1121,1170,1222,1278,1330,1389,1435,1485,1529,1561,1593,1625,1657,1689,1721,1753,1785,1817,1849,1881,1895];
const names = ["",..."ABCDEFGHIJKLMNOPQRSTUVWXYZ","AA","AB","AC","AD","AE","AF","AG","AH","AI","AJ","AK",""];
const months = ["January","February","March","April","May","June","July","August","September","October","November","December"];
const monthName = i => months[i % 12] + " " + (2000 + Math.floor(i / 12));

const gasoline = "1220.34 1214.00 1212.51 1190.17 1187.77 1246.45 1244.38 1275.65 1306.92 1306.15 1277.86 1298.02 1287.02 1285.34 1284.85 1294.67 1292.34 1301.15 1302.25 1291.87 1278.93 1273.23 1248.47 1219.87 1227.50 1225.43 1233.62 1265.08 1293.46 1289.42 1278.72 1269.97 1267.72 1291.09 1300.54 1286.66 1300.81 1329.15 1352.22 1316.61 1288.79 1280.40 1271.10 1268.17 1267.51 1270.49 1290.42 1301.49".split(" ");
const ma3 = "1215.62 1205.56 1196.82 1208.13 1226.20 1255.49 1275.65 1296.24 1296.98 1294.01 1287.63 1290.13 1285.74 1288.29 1290.62 1296.05 1298.58 1298.42 1291.02 1281.34 1266.88 1247.19 1231.95 1224.27 1228.85 1241.38 1264.05 1282.65 1287.20 1279.37 1272.14 1276.26 1286.45 1292.76 1296.00 1305.54 1327.39 1332.66 1319.21 1295.27 1280.10 1273.22 1268.93 1268.72 1276.14".split(" ");
const ma6 = "1211.87 1215.88 1226.16 1241.89 1261.22 1276.24 1284.83 1291.94 1293.55 1289.87 1287.96 1290.37 1290.90 1293.43 1294.52 1293.54 1289.96 1282.65 1269.10 1256.65 1245.57 1238.02 1236.66 1244.16 1255.75 1264.29 1271.71 1277.40 1281.73 1282.91 1282.45 1286.13 1296.00 1310.08 1314.33 1312.37 1311.33 1306.38 1296.22 1282.10 1274.41 1274.68".split(" ");
const ma12 = "1248.35 1253.91 1259.85 1265.88 1274.59 1283.30 1287.86 1292.69 1294.04 1291.70 1288.96 1286.51 1280.00 1275.04 1270.05 1265.78 1263.31 1263.41 1262.43 1260.47 1258.64 1257.71 1259.20 1263.54 1269.10 1275.21 1283.85 1293.74 1298.03 1297.64 1296.89 1296.26 1296.11 1296.09 1294.37 1293.53".split(" ");
const err3 = "-25.45 -17.79 49.63 36.25 49.45 51.43 30.50 -18.38 1.04 -6.99 -2.29 -5.28 8.93 4.05 10.53 6.20".split(" ");
const err6 = "32.51 59.77 80.77 64.26 16.64 21.79 2.19 -6.60 -8.70 4.80 4.38 10.78 11.36".split(" ");
const err12 = "38.67 31.43 25.00 28.79 17.75 17.85 14.39".split(" ");
const sq3 = "647.53 316.48 2,463.47 1,314.06 2,445.30 2,644.70 930.25 337.82 1.09 48.86 5.26 27.84 79.80 16.43 110.88 38.40".split(" ");
const sq6 = "1,056.68 3,572.45 6,522.99 4,129.35 276.89 474.59 4.80 43.52 75.72 23.01 19.18 116.14 128.94".split(" ");
const sq12 = "1,495.24 987.95 624.83 828.77 315.06 318.47 207.00".split(" ");

const head1 = ["Index","Month Year","Gasoline","3 Months","6 Months","12 Months"];
const head2 = [...head1,"Error 3","Error 6","Error 12","(Error 3) ^2","(Error 6) ^2","(Error 12) ^2"];
const record = i => [String(i + 1), monthName(i), gasoline[i], ma3[i-3], ma6[i-6], ma12[i-12], err3[i-3], err6[i-6], err12[i-12], sq3[i-3], sq6[i-6], sq12[i-12]];

let html = "<colgroup>" + edges.map((e, i) => `<col style="width:${e - (i ? edges[i-1] : 0)}px">`).join("") + "</colgroup>";
html += '<tr class="h-[11px]">' + names.map((n, c) =>
  `<th class="p-0 h-[11px] text-[7.500px] leading-[10px] font-bold text-[#e0e0e0] overflow-hidden border-r border-b border-r-[#5a5a5a] ${n === "Q" ? "bg-[#666] border-b-[#1e7145]" : "bg-[#0a0a0a] border-b-[#8a8a8a]"}"><div class="h-[10px] pt-px pl-[2px] leading-[9px]">${n}</div></th>`).join("") + "</tr>";
for (let r = 1; r <= 53; r++) {
  const tall = r >= 5;
  html += `<tr class="${tall ? "h-[12px]" : "h-[10px]"}"><th class="p-0 bg-[#0a0a0a] border-r border-b border-[#4a4a4a] text-[7px] font-bold text-[#d0d0d0] overflow-hidden ${tall ? "h-[12px]" : "h-[10px]"}"><div class="${tall ? "h-[11px] pt-[2px]" : "h-[9px] pt-px"} leading-[8px]">${r}</div></th>`;
  for (let c = 1; c < edges.length; c++) {
    const in1 = r >= 5 && c >= 4 && c <= 9, in2 = r >= 34 && c >= 12 && c <= 23;
    const right = in1 || in2 || (r >= 5 && c === 3) || (r >= 34 && c === 11);
    const bottom = in1 || in2 || (r === 4 && c >= 4 && c <= 9) || (r === 33 && c >= 12 && c <= 23);
    let text = "", align = "text-center -mx-[8px]", flag = false;
    if (in1) {
      const k = c - 4;
      text = (r === 5 ? head1[k] : record(r - 6)[k]) || "";
      if (k === 0 || k > 2) align = r === 5 ? "text-left pl-[2px] origin-left" : "text-right pr-px origin-right";
      flag = k > 2 && r > 5 && text;
    }
    if (in2) {
      const k = c - 12;
      text = (r === 34 ? head2[k] : record(r - 35)[k]) || "";
      flag = k > 2 && k < 6 && r > 34 && text;
    }
    const squeeze = text[0] === "(" ? "scale-x-[0.83]" : /[A-Z]/.test(text) ? "scale-x-[0.94]" : "scale-x-[0.84]";
    html += `<td class="p-0 overflow-hidden border-r border-b ${right ? "border-r-black" : "border-r-[#d9d9d9]"} ${bottom ? "border-b-black" : "border-b-[#d9d9d9]"} ${flag ? "bg-[linear-gradient(135deg,#1e7b34_2.5px,transparent_3px)]" : ""}">${text ? `<div class="h-[11px] pt-px text-[10px] leading-[11px] ${align} ${squeeze}">${text}</div>` : ""}</td>`;
  }
  html += "</tr>";
}
document.getElementById("sheet").innerHTML = html;

// monthly prices after 2003, as [axis offset, height] key points joined linearly
const keys = [[568,575],[600,560],[640,552],[660,556],[668,568],[693,545],[710,552],[722,538],[735,515],[745,518],[752,530],[768,530],[790,525],[803,512],[830,510],[838,515],[846,540],[862,546],[879,549],[888,545],[896,520],[905,512],[930,508],[947,505],[956,493],[970,478],[990,475],[998,467],[1007,440],[1016,410],[1022,407],[1032,440],[1040,460],[1049,470],[1057,518],[1065,568],[1074,563],[1083,528],[1092,512],[1100,508],[1117,512],[1125,485],[1140,472],[1158,480],[1185,476],[1200,458],[1215,462],[1258,462],[1268,446],[1277,431],[1286,426],[1294,400],[1303,399],[1335,398],[1355,388],[1387,388],[1395,376],[1403,368],[1412,373],[1422,385],[1430,409],[1444,377],[1455,382],[1470,398],[1482,404],[1500,395],[1515,412],[1530,405],[1550,402],[1568,416],[1610,420],[1640,428],[1650,436],[1666,457],[1675,479],[1682,521],[1692,539],[1700,524],[1715,505],[1725,500],[1740,508],[1755,520],[1768,532],[1776,541],[1785,553],[1795,563],[1810,565],[1825,550],[1840,540],[1865,545],[1880,535],[1887,520],[1895,517],[1915,525],[1930,533],[1940,540],[1955,527],[1970,518],[1990,508],[2015,503],[2030,490],[2050,488],[2063,472],[2072,480],[2080,542],[2090,565],[2100,565],[2110,545],[2122,528],[2135,520],[2155,515],[2175,512],[2192,503],[2205,512],[2216,572],[2225,590],[2235,573],[2245,558],[2255,562],[2275,572],[2285,560],[2293,538],[2310,517],[2325,513],[2335,500],[2350,485],[2368,470],[2377,457],[2385,475],[2395,485],[2402,465],[2411,400],[2420,392],[2428,392],[2435,362],[2443,376],[2452,432],[2461,459],[2470,475],[2478,482],[2487,505],[2502,505],[2520,490],[2540,500],[2555,478],[2562,448],[2570,446],[2578,470],[2588,495],[2600,503],[2608,485],[2625,468],[2638,480],[2648,464],[2660,475],[2674,497],[2685,485],[2700,463],[2708,458],[2720,475],[2735,485],[2745,480]];
const price = gasoline.map(Number);
for (let i = 48; i < 306; i++) {
  const x = 162 + i * 8.46;
  let k = 0;
  while (k < keys.length - 2 && keys[k + 1][0] < x) k++;
  const [x0, y0] = keys[k], [x1, y1] = keys[k + 1];
  price.push((940.5 - (y0 + (y1 - y0) * Math.min(1, Math.max(0, (x - x0) / (x1 - x0))))) * 3.607);
}
const average = n => price.map((_, i) => i < n ? null : price.slice(i - n, i).reduce((a, b) => a + b) / n);
const X = i => 724 + i * 2.82, Y = v => 623.5 - v * 0.0924;

let s = '<rect x="679.5" y="368.500" width="914" height="326" fill="#fff" stroke="#d9d9d9"/>';
[2500, 2000, 1500, 1000, 500, 0].forEach(v => {
  s += `<path d="M722.500 ${Math.floor(Y(v)) + .5}H1585.500" stroke="#d2d2d2"/><text x="718" y="${Y(v) + 2}" font-size="6" text-anchor="end" fill="#555" stroke="#555" stroke-width=".2">${v}.00</text>`;
});
[[price, "#5b9bd5"], [average(3), "#ed7d31"], [average(6), "#a5a5a5"], [average(12), "#ffc000"]].forEach(([data, color]) => {
  const pts = data.map((v, i) => v === null ? null : [X(i).toFixed(1), (Y(v) - .4).toFixed(1)]).filter(Boolean);
  s += `<polyline fill="none" stroke="${color}" stroke-width="1.100" points="${pts.join(" ")}"/><path fill="none" stroke="${color}" stroke-width="3.400" stroke-linecap="round" d="${pts.map(p => `M${p[0]} ${p[1]}h.01`).join("")}"/>`;
});
for (let i = 0; i < 306; i += 3) s += `<text transform="translate(${(X(i) + 2.800).toFixed(1)} 627.500) rotate(-90)" text-anchor="end" font-size="5.700" fill="#595959" stroke="#595959" stroke-width=".15">${monthName(i)}</text>`;
s += '<text x="1136" y="382.500" text-anchor="middle" font-size="8.500" font-weight="700" fill="#595959" stroke="#595959" stroke-width=".25" textLength="181">Gasoline Real Data and Forecasting Data Graph</text>';
s += '<text x="1154.500" y="669.500" text-anchor="middle" font-size="6.500" font-weight="700" fill="#595959" textLength="32">Month Year</text>';
s += '<text transform="translate(694 508.500) rotate(-90)" text-anchor="middle" font-size="6.500" fill="#444" stroke="#444" stroke-width=".15" textLength="55">Price (Won per litre)</text>';
[[1050, "Gasoline", 21, "#5b9bd5"], [1093, "3 Months", 24, "#ed7d31"], [1139, "6 Months", 23, "#a5a5a5"], [1184, "12 Months", 26, "#ffc000"]].forEach(([x, t, w, c]) => {
  s += `<path d="M${x} 685h13" stroke="${c}" stroke-width="1.200"/><circle cx="${x + 6.500}" cy="684.500" r="1.800" fill="${c}"/><text x="${x + 14}" y="687" font-size="5.800" fill="#444" stroke="#444" stroke-width=".15" textLength="${w}">${t}</text>`;
});
document.getElementById("chart").innerHTML = s;
</script>
</body>
</html>
